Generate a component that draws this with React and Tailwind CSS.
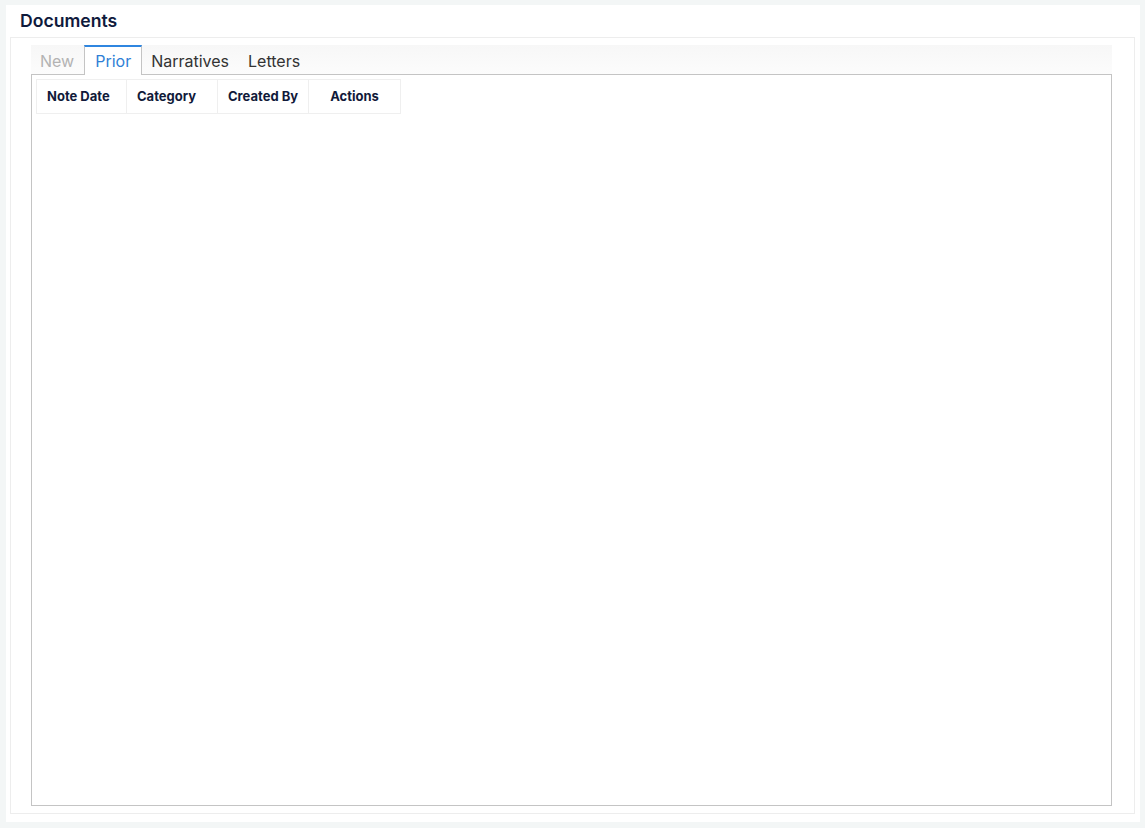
import React, { useState } from 'react'

const tabs = [
  { label: 'New', pad: 'pl-[9px] pr-[10px]' },
  { label: 'Prior', pad: 'px-[10px]' },
  { label: 'Narratives', pad: 'pl-[9px] pr-[9px]' },
  { label: 'Letters', pad: 'px-[10px]' },
]
const columns = [
  { label: 'Note Date', cls: 'w-[90px] text-left' },
  { label: 'Category', cls: 'w-[91px] text-left' },
  { label: 'Created By', cls: 'w-[91px] text-left' },
  { label: 'Actions', cls: 'w-[92px] text-center' },
]

const App = () => {
  const [active, setActive] = useState('Prior')

  return (
    <div className="h-[828px] bg-[#f3f6f6] pt-[5px] pl-[6px] pr-[5px] pb-[6px] font-['Inter','Liberation_Sans',sans-serif]">
      <div className="h-full bg-white flex flex-col pl-[4px] pr-[5px] pb-[8px]">
        <div className="h-[32px] flex items-center pl-[10px]">
          <h2 className="text-[17.6px] font-semibold text-[#0f1a3c] leading-none">Documents</h2>
        </div>

        <div className="flex-1 flex flex-col border border-[#ededed] pt-[7px] pb-[7px] pl-[20px] pr-[22px]">
          {/* tab strip */}
          <div className="h-[29px] flex items-end bg-linear-to-b from-[#f7f7f7] to-[#fcfcfc]">
            {tabs.map(({ label, pad }) => {
              const isActive = label === active
              const isDisabled = label === 'New'
              return (
                <div
                  key={label}
                  onClick={() => !isDisabled && setActive(label)}
                  className={
                    isActive
                      ? `h-[30px] -mb-px relative z-10 flex items-center ${pad} bg-white border-t-2 border-t-[#2f86e0] border-x border-x-[#c4c4c4] text-[16px] text-[#2f7fd6] cursor-pointer`
                      : isDisabled
                        ? `h-[29px] pt-[2px] flex items-center ${pad} text-[16px] text-[#b3b3b3]`
                        : `h-[29px] pt-[2px] flex items-center ${pad} text-[16px] text-[#333333] cursor-pointer`
                  }
                >
                  {label}
                </div>
              )
            })}
          </div>

          {/* tab content */}
          <div className="flex-1 border border-[#c4c4c4] p-[4px]">
            <table className="border-collapse table-fixed w-[364px]">
              <thead>
                <tr>
                  {columns.map((c) => (
                    <th
                      key={c.label}
                      className={`h-[34px] border border-[#efefef] px-[10px] whitespace-nowrap text-[13px] font-bold text-[#111a3a] ${c.cls}`}
                    >
                      {c.label}
                    </th>
                  ))}
                </tr>
              </thead>
              <tbody></tbody>
            </table>
          </div>
        </div>
      </div>
    </div>
  )
}

export default App
